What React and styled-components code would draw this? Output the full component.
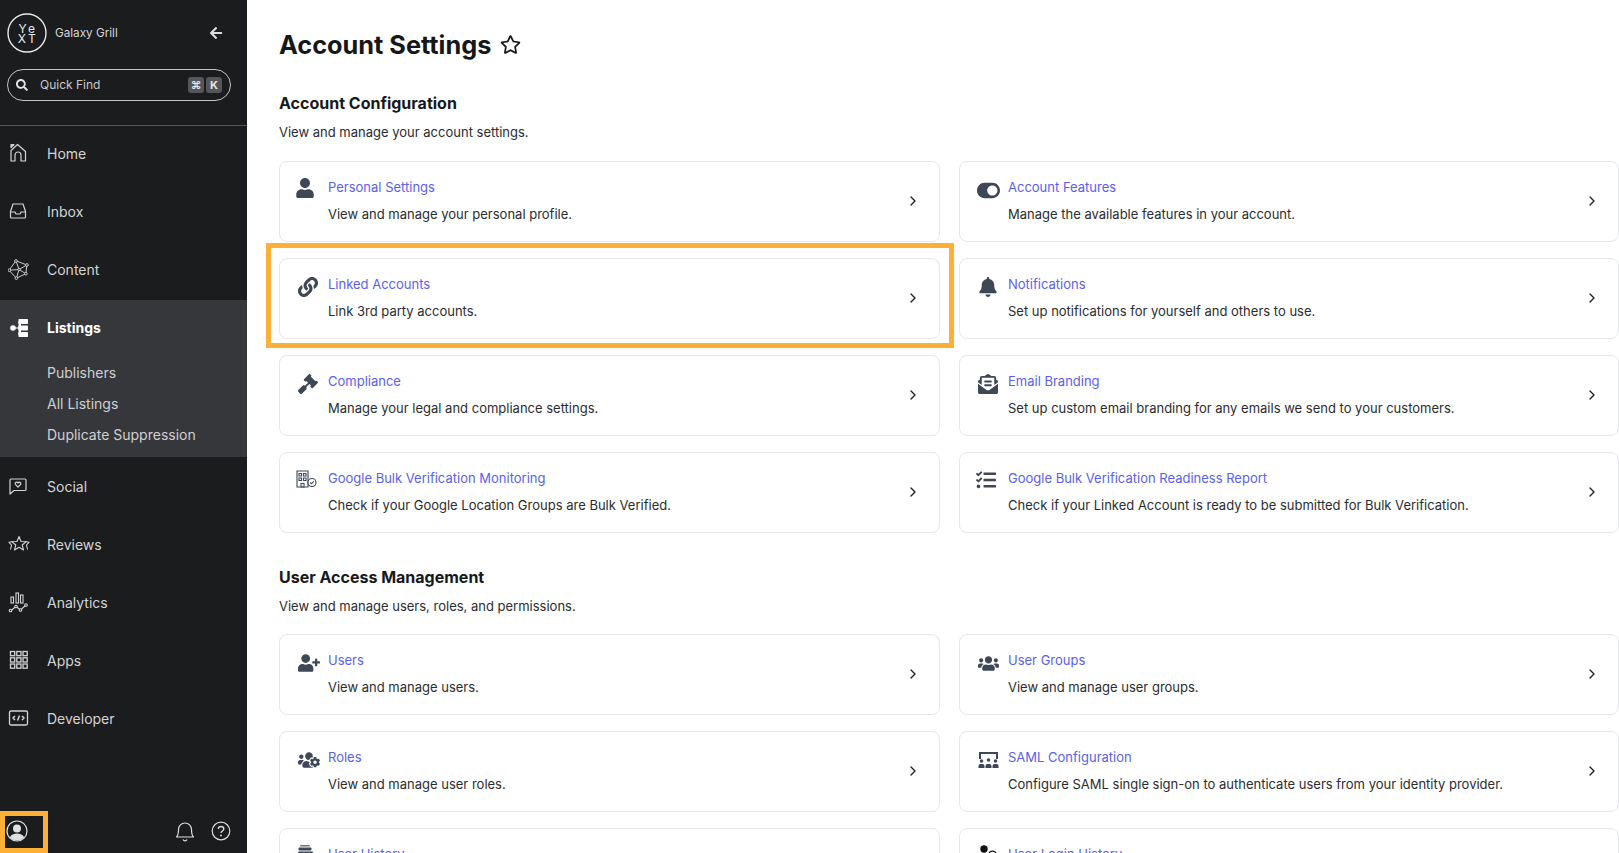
import React from 'react';
import styled, { createGlobalStyle } from 'styled-components';
import {
  FaUser, FaLink, FaGavel, FaBell, FaUserPlus, FaUsers, FaUsersCog, FaTasks,
  FaToggleOn, FaEnvelopeOpenText, FaSearch, FaArrowLeft, FaRegStar,
} from 'react-icons/fa';
import { FiChevronRight } from 'react-icons/fi';

const GlobalStyle = createGlobalStyle`
  html, body { margin: 0; padding: 0; height: 100%; overflow: hidden; background: #fff; }
  body { font-family: Inter, "Liberation Sans", sans-serif; }
  * { box-sizing: border-box; }
`;

const Page = styled.div`
  display: flex;
  width: 1619px;
  height: 853px;
  overflow: hidden;
`;

const Sidebar = styled.aside`
  position: relative;
  flex: 0 0 247px;
  height: 853px;
  background: #1b1c1e;
  color: #d9d9d9;
  display: flex;
  flex-direction: column;
`;

const SideTop = styled.div`
  height: 126px;
  padding: 13px 16px 0 7px;
  border-bottom: 1px solid #55565a;
`;

const BrandRow = styled.div`
  display: flex;
  align-items: center;
  height: 40px;
`;

const BrandName = styled.span`
  font-size: 11.7px;
  margin-left: 8px;
  color: #d6d6d6;
  flex: 1;
`;

const BackIcon = styled(FaArrowLeft)`
  color: #dcdcdc;
  font-size: 14px;
  margin-right: 8px;
`;

const SearchBox = styled.div`
  margin-top: 16px;
  width: 224px;
  height: 32px;
  border: 1px solid #c4c4c4;
  border-radius: 16px;
  display: flex;
  align-items: center;
  padding: 0 8px;
  font-size: 12px;
  color: #c9c9c9;
`;

const SearchLabel = styled.span`
  margin-left: 12px;
  padding-bottom: 2px;
  flex: 1;
`;

const Kbd = styled.span`
  width: 16px;
  height: 16px;
  margin-left: 2px;
  border-radius: 3px;
  background: #55565a;
  color: #e4e4e4;
  font-size: 11px;
  font-weight: 700;
  display: flex;
  align-items: center;
  justify-content: center;
`;

const Nav = styled.nav`
  display: flex;
  flex-direction: column;
  margin-top: -2px;
`;

const NavRow = styled.div`
  height: 58px;
  display: flex;
  align-items: center;
  font-size: 14px;
  font-weight: ${p => (p.$active ? 700 : 400)};
  color: ${p => (p.$active ? '#fff' : '#d4d4d4')};
`;

const NavIcon = styled.span`
  width: 47px;
  padding-left: 8px;
  display: flex;
  align-items: center;
`;

const ActiveGroup = styled.div`
  background: #36373b;
  height: 157px;
  margin-top: 2px;
  & > ${NavRow} { height: 55px; margin-bottom: 2px; }
`;

const SubItem = styled.div`
  height: 31px;
  padding-left: 47px;
  display: flex;
  align-items: center;
  font-size: 14px;
  color: #d0d0d0;
`;

const SideFooter = styled.div`
  margin-top: auto;
  height: 42px;
  padding: 0 16px 3px 6px;
  display: flex;
  align-items: center;
  gap: 16px;
`;

const FooterSpacer = styled.div`
  flex: 1;
`;

const Callout = styled.div`
  position: absolute;
  border: 5px solid #fdb035;
  pointer-events: none;
`;

const ProfileCallout = styled(Callout)`
  left: 0;
  bottom: 0;
  width: 48px;
  height: 42px;
`;

const Main = styled.main`
  position: relative;
  flex: 1;
  padding: 26px 0 0 32px;
  min-width: 0;
  color: #111;
`;

const TitleRow = styled.div`
  display: flex;
  align-items: center;
  gap: 9px;
  height: 36px;
`;

const Title = styled.h1`
  margin: 0;
  font-size: 25.3px;
  font-weight: 700;
  color: #16171a;
`;

const StarIcon = styled(FaRegStar)`
  font-size: 21px;
  color: #1a1b1e;
`;

const SectionTitle = styled.h2`
  margin: ${p => (p.$first ? '29px' : '32px')} 0 0;
  font-size: 16px;
  line-height: 24px;
  font-weight: 700;
  color: #17181b;
`;

const SectionText = styled.p`
  margin: 6px 0 0;
  font-size: 13px;
  line-height: 22px;
  color: #2b2c30;
`;

const CardGrid = styled.div`
  margin-top: ${p => (p.$first ? '18px' : '17px')};
  display: grid;
  grid-template-columns: 661px 660px;
  column-gap: 19px;
  row-gap: 16px;
`;

const Card = styled.div`
  position: relative;
  height: 81px;
  border: 1px solid #e6e7ec;
  border-radius: 8px;
  display: flex;
  align-items: flex-start;
  padding: 14px 18px 0 17px;
  background: #fff;
`;

const CardCallout = styled(Callout)`
  left: -14px;
  top: -16px;
  right: -15px;
  bottom: -10px;
`;

const CardIcon = styled.span`
  width: 31px;
  height: 26px;
  flex: none;
  display: flex;
  align-items: center;
  color: #3d4756;
  font-size: 20px;
  padding-left: ${p => (p.$left > 0 ? p.$left : 0)}px;
  margin-left: ${p => (p.$left < 0 ? p.$left : 0)}px;
  margin-top: ${p => 1 - (p.$up || 0)}px;
  margin-right: ${p => (p.$left < 0 ? -p.$left : 0)}px;
`;

const CardBody = styled.div`
  flex: 1;
  min-width: 0;
`;

const CardTitle = styled.div`
  font-size: 13px;
  line-height: 22px;
  color: #5a5ff0;
`;

const CardText = styled.div`
  margin-top: 5px;
  font-size: 13px;
  line-height: 22px;
  color: #2b2c30;
`;

const Chevron = styled(FiChevronRight)`
  align-self: center;
  margin-top: -16px;
  font-size: 16px;
  color: #1f2024;
`;

const Line = ({ size = 20, children, sw = 1.2 }) => (
  <svg width={size} height={size} viewBox="0 0 20 20" fill="none" stroke="currentColor" strokeWidth={sw} strokeLinejoin="round" strokeLinecap="round">
    {children}
  </svg>
);

const HomeIcon = () => (
  <Line>
    <path d="M3 18V7.500L9.500 1.500 17.500 8.500V18H13V12a3 3 0 0 0-6 0V18Z" />
    <path d="M3 1.500H6L3 4.500Z" fill="currentColor" />
  </Line>
);
const InboxIcon = () => (
  <Line>
    <path d="M5 3H15L17.500 10.500V16a1 1 0 0 1-1 1H3.500a1 1 0 0 1-1-1V10.500Z" />
    <path d="M2.500 11H7L8 13H12L13 11H17.500" />
  </Line>
);
const ContentIcon = () => (
  <svg width="21" height="21" viewBox="0 0 20 20" fill="none" stroke="currentColor" strokeWidth="0.9" strokeLinejoin="round">
    <path d="M7.600 1.700L18 5.700 17 14 8 18.300 1 10.700Z" />
    <path d="M7.600 1.700L10.500 10 17 14M18 5.700L10.500 10 8 18.300M1 10.700L10.500 10" />
    <circle cx="7.600" cy="1.900" r="1.300" fill="#1b1c1e" />
    <circle cx="18" cy="5.700" r="1.300" fill="#1b1c1e" />
    <circle cx="1.300" cy="10.700" r="1.300" fill="#1b1c1e" />
    <circle cx="17" cy="14" r="1.300" fill="#1b1c1e" />
    <circle cx="8" cy="18.200" r="1.300" fill="#1b1c1e" />
    <circle cx="10.500" cy="10" r="1.100" fill="#1b1c1e" />
  </svg>
);
const ListingsIcon = () => (
  <svg width="20" height="20" viewBox="0 0 20 20" fill="#fff">
    <circle cx="5" cy="10" r="2.800" />
    <path d="M7 9.500H11V10.500H7Z" />
    <rect x="10.500" y="1" width="9.500" height="5" rx=".8" />
    <rect x="10.500" y="7.500" width="9.500" height="5" rx=".8" />
    <rect x="10.500" y="14" width="9.500" height="5" rx=".8" />
    <rect x="10.500" y="3" width="2.500" height="14" />
  </svg>
);
const SocialIcon = () => (
  <Line>
    <path d="M3 3H17a1 1 0 0 1 1 1V13.500a1 1 0 0 1-1 1H6L2 18V4a1 1 0 0 1 1-1Z" />
    <path d="M10 11L7.300 8.300a1.500 1.500 0 0 1 2.700-1.300 1.500 1.500 0 0 1 2.700 1.300Z" />
  </Line>
);
const ReviewsIcon = () => (
  <svg width="22" height="20" viewBox="0 0 22 20" fill="none" stroke="currentColor" strokeWidth="1.100" strokeLinejoin="round">
    <path d="M11 2.500L13 7.500 18 7.800 14.200 11 15.500 16 11 13.300 6.500 16 7.800 11 4 7.800 9 7.500Z" />
    <path d="M5 7.500L1 8.300 3.500 11 2.500 15.500M17 7.500L21 8.300 18.500 11 19.500 15.500" />
  </svg>
);
const AnalyticsIcon = () => (
  <svg width="21" height="21" viewBox="0 0 21 21" fill="none" stroke="currentColor" strokeWidth="1.100">
    <rect x="3" y="5" width="2.500" height="6" />
    <rect x="8" y="1" width="2.500" height="10" />
    <rect x="12.500" y="3" width="2.500" height="8" />
    <path d="M3 18.500L8 14.500 12.500 18 18 13" />
    <circle cx="2.500" cy="18.500" r="1.300" fill="#1b1c1e" />
    <circle cx="8" cy="14.500" r="1.300" fill="#1b1c1e" />
    <circle cx="12.500" cy="18" r="1.300" fill="#1b1c1e" />
    <circle cx="18" cy="13" r="1.300" fill="#1b1c1e" />
  </svg>
);
const AppsIcon = () => (
  <svg width="20" height="20" viewBox="0 0 20 20" fill="none" stroke="currentColor" strokeWidth="1.300">
    {[1.500, 7.800, 14].map(y => [2.500, 8.800, 15].map(x => (
      <rect key={`${x}-${y}`} x={x} y={y} width="4.200" height="4.200" />
    )))}
  </svg>
);
const DeveloperIcon = () => (
  <svg width="21" height="18" viewBox="0 0 21 18" fill="none" stroke="currentColor" strokeWidth="1.300" strokeLinejoin="round">
    <rect x="1.500" y="2" width="18" height="14" rx="1.500" />
    <path d="M7 7L5 9 7 11M14 7L16 9 14 11M11.500 6.500L9.500 11.500" strokeWidth="1.500" />
  </svg>
);

const YextLogo = () => (
  <svg width="40" height="40" viewBox="0 0 40 40" fill="none">
    <circle cx="20" cy="20" r="19" stroke="#e8e8e8" strokeWidth="1.400" />
    <text textAnchor="middle" fill="#e8e8e8" fontFamily="Inter, sans-serif" fontSize="12" letterSpacing="2.500">
      <tspan x="21" y="19.500">Ye</tspan>
      <tspan x="21" y="29.500">XT</tspan>
    </text>
  </svg>
);

const ProfileIcon = () => (
  <svg width="22" height="22" viewBox="0 0 22 22">
    <circle cx="11" cy="11" r="10" fill="none" stroke="#e0e0e0" strokeWidth="1.200" />
    <circle cx="11" cy="8.500" r="4" fill="#e0e0e0" />
    <path d="M3.800 17.500C5 14.500 8 13.500 11 13.500S17 14.500 18.200 17.500A10 10 0 0 1 3.800 17.500Z" fill="#e0e0e0" />
  </svg>
);
const BellOutline = () => (
  <svg width="20" height="22" viewBox="0 0 20 22" fill="none" stroke="#dcdcdc" strokeWidth="1.200" strokeLinejoin="round">
    <path d="M1.500 17C3.500 15 3.500 13 3.500 9.500a6.500 6.500 0 0 1 13 0C16.500 13 16.500 15 18.500 17Z" />
    <path d="M8 19.500a2.200 2.200 0 0 0 4 0" />
  </svg>
);
const HelpIcon = () => (
  <svg width="20" height="20" viewBox="0 0 20 20" fill="none" stroke="#dcdcdc" strokeWidth="1.200">
    <circle cx="10" cy="10" r="8.800" />
    <path d="M7.200 7.800A2.900 2.900 0 0 1 10 5.500c1.600 0 2.800 1 2.800 2.400 0 2-2.800 2.200-2.800 4.100" strokeWidth="1.400" />
    <circle cx="10" cy="14.500" r=".9" fill="#dcdcdc" stroke="none" />
  </svg>
);

const BuildingCheck = () => (
  <svg width="21" height="18" viewBox="0 0 21 18" fill="none" stroke="#3d4756" strokeWidth="1.100">
    <path d="M1 1H12V17H1Z" />
    <path d="M3 3.500H5.500V6H3ZM7.500 3.500H10V6H7.500ZM3 8H5.500V10.500H3ZM7.500 8H10V10.500H7.500ZM5 17V13.500H8V17Z" />
    <circle cx="16" cy="12.500" r="4" fill="#fff" />
    <path d="M14.200 12.500L15.500 13.800 17.800 11.300" />
  </svg>
);
const SamlIcon = () => (
  <svg width="21" height="18" viewBox="0 0 21 18" fill="#3d4756">
    <path d="M1 1H20V8H18V3H3V8H1Z" />
    <circle cx="3.500" cy="10" r="1.800" />
    <circle cx="10.500" cy="9" r="1.800" />
    <circle cx="17.500" cy="10" r="1.800" />
    <path d="M0.500 17V15a2 2 0 0 1 2-2H4.500a2 2 0 0 1 2 2V17Z" />
    <path d="M7.500 17V15a2 2 0 0 1 2-2H11.500a2 2 0 0 1 2 2V17Z" />
    <path d="M14.500 17V15a2 2 0 0 1 2-2H18.500a2 2 0 0 1 2 2V17Z" />
  </svg>
);
const HistoryStack = () => (
  <svg width="18" height="20" viewBox="0 0 18 20" fill="#3d4756">
    <rect x="3" y="0" width="10" height="1.500" rx=".7" fill="#6d7480" />
    <rect x="1.500" y="2.500" width="13" height="3" rx="1" />
    <rect x="1" y="6.500" width="15" height="3.500" rx="1" />
    <rect x="1" y="11" width="15" height="3.500" rx="1" />
    <rect x="1.500" y="15.500" width="13" height="3" rx="1" />
  </svg>
);
const LoginHistory = () => (
  <svg width="20" height="20" viewBox="0 0 20 20" fill="#111">
    <circle cx="6" cy="4" r="3.700" />
    <path d="M0 17V13a4 4 0 0 1 4-4H8a4 4 0 0 1 4 4V17Z" />
    <circle cx="14.500" cy="10" r="3.800" fill="#fff" stroke="#111" strokeWidth="1.300" />
  </svg>
);

const configCards = [
  { icon: <FaUser />, left: -2, up: 2, title: 'Personal Settings', text: 'View and manage your personal profile.' },
  { icon: <FaToggleOn size={23} />, title: 'Account Features', text: 'Manage the available features in your account.' },
  { icon: <FaLink />, left: 1, title: 'Linked Accounts', text: 'Link 3rd party accounts.', marked: true },
  { icon: <FaBell />, left: 1, title: 'Notifications', text: 'Set up notifications for yourself and others to use.' },
  { icon: <FaGavel />, left: 1, title: 'Compliance', text: 'Manage your legal and compliance settings.' },
  { icon: <FaEnvelopeOpenText />, left: 1, title: 'Email Branding', text: 'Set up custom email branding for any emails we send to your customers.' },
  { icon: <BuildingCheck />, left: -1, up: 2, title: 'Google Bulk Verification Monitoring', text: 'Check if your Google Location Groups are Bulk Verified.' },
  { icon: <FaTasks />, left: -1, up: 1, title: 'Google Bulk Verification Readiness Report', text: 'Check if your Linked Account is ready to be submitted for Bulk Verification.' },
];

const accessCards = [
  { icon: <FaUserPlus size={22} />, left: 1, title: 'Users', text: 'View and manage users.' },
  { icon: <FaUsers size={21} />, left: 1, title: 'User Groups', text: 'View and manage user groups.' },
  { icon: <FaUsersCog size={22} />, left: 1, title: 'Roles', text: 'View and manage user roles.' },
  { icon: <SamlIcon />, left: 1, title: 'SAML Configuration', text: 'Configure SAML single sign-on to authenticate users from your identity provider.' },
  { icon: <HistoryStack />, up: 2, title: 'User History', text: 'View user history.' },
  { icon: <LoginHistory />, up: 2, left: 1, title: 'User Login History', text: 'View user login history.' },
];

const navTop = [
  { icon: <HomeIcon />, label: 'Home' },
  { icon: <InboxIcon />, label: 'Inbox' },
  { icon: <ContentIcon />, label: 'Content' },
];
const navBottom = [
  { icon: <SocialIcon />, label: 'Social' },
  { icon: <ReviewsIcon />, label: 'Reviews' },
  { icon: <AnalyticsIcon />, label: 'Analytics' },
  { icon: <AppsIcon />, label: 'Apps' },
  { icon: <DeveloperIcon />, label: 'Developer' },
];

const SettingCard = ({ icon, left, up, title, text, marked }) => (
  <Card>
    <CardIcon $left={left} $up={up}>{icon}</CardIcon>
    <CardBody>
      <CardTitle>{title}</CardTitle>
      <CardText>{text}</CardText>
    </CardBody>
    <Chevron />
    {marked && <CardCallout />}
  </Card>
);

export default function App() {
  return (
    <Page>
      <GlobalStyle />
      <Sidebar>
        <SideTop>
          <BrandRow>
            <YextLogo />
            <BrandName>Galaxy Grill</BrandName>
            <BackIcon />
          </BrandRow>
          <SearchBox>
            <FaSearch size={12} color="#e4e4e4" />
            <SearchLabel>Quick Find</SearchLabel>
            <Kbd>⌘</Kbd>
            <Kbd>K</Kbd>
          </SearchBox>
        </SideTop>
        <Nav>
          {navTop.map(n => (
            <NavRow key={n.label}><NavIcon>{n.icon}</NavIcon>{n.label}</NavRow>
          ))}
          <ActiveGroup>
            <NavRow $active><NavIcon><ListingsIcon /></NavIcon>Listings</NavRow>
            <SubItem>Publishers</SubItem>
            <SubItem>All Listings</SubItem>
            <SubItem>Duplicate Suppression</SubItem>
          </ActiveGroup>
          {navBottom.map(n => (
            <NavRow key={n.label}><NavIcon>{n.icon}</NavIcon>{n.label}</NavRow>
          ))}
        </Nav>
        <SideFooter>
          <ProfileIcon />
          <FooterSpacer />
          <BellOutline />
          <HelpIcon />
        </SideFooter>
        <ProfileCallout />
      </Sidebar>
      <Main>
        <TitleRow>
          <Title>Account Settings</Title>
          <StarIcon />
        </TitleRow>
        <SectionTitle $first>Account Configuration</SectionTitle>
        <SectionText>View and manage your account settings.</SectionText>
        <CardGrid $first>
          {configCards.map(c => <SettingCard key={c.title} {...c} />)}
        </CardGrid>
        <SectionTitle>User Access Management</SectionTitle>
        <SectionText>View and manage users, roles, and permissions.</SectionText>
        <CardGrid>
          {accessCards.map(c => <SettingCard key={c.title} {...c} />)}
        </CardGrid>
      </Main>
    </Page>
  );
}
